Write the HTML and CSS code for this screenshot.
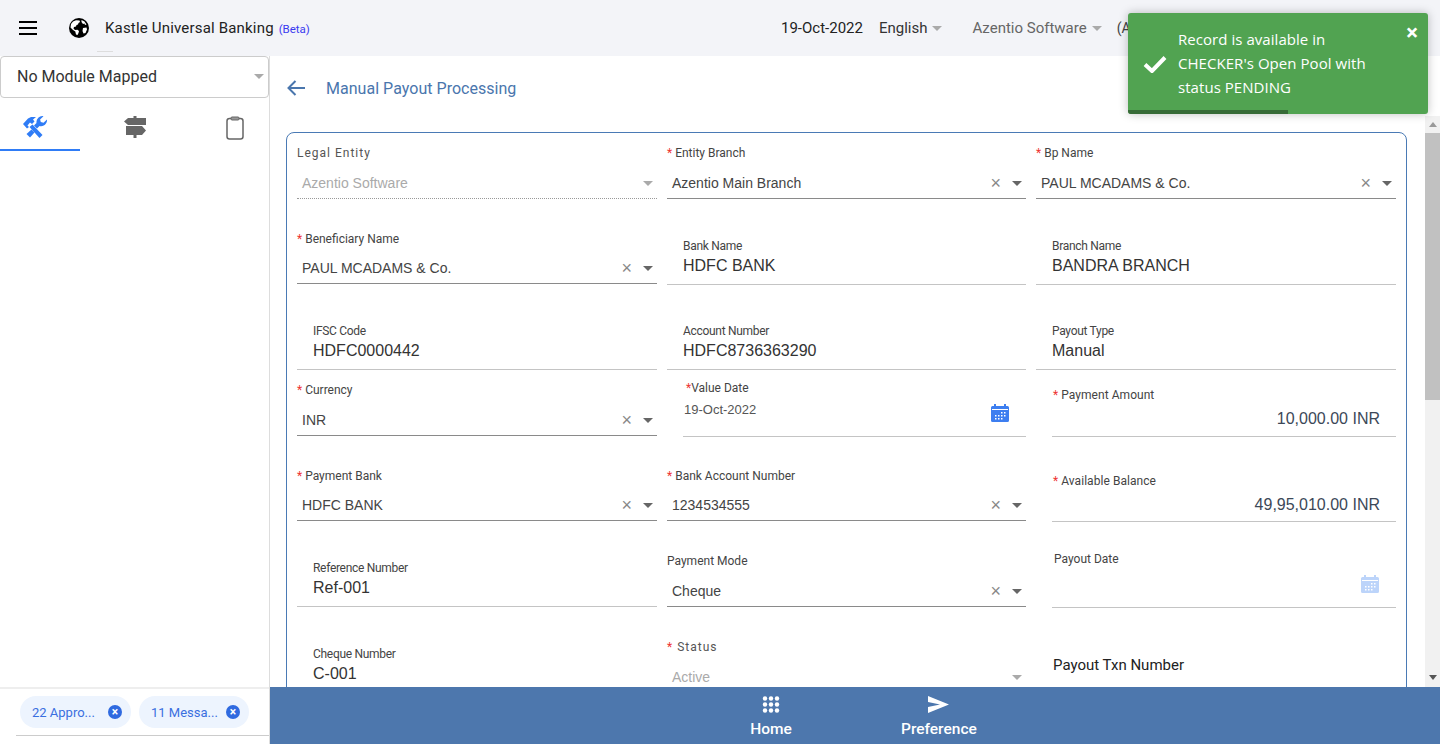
FILE: index.html
```html
<!DOCTYPE html>
<html>
<head>
    <title>Manual Payout Processing</title>
    <meta name="viewport" content="width=device-width, initial-scale=1.0">
    <link rel="stylesheet" href="styles.css">
</head>
<body>
    <svg width="0" height="0" class="defs">
        <symbol id="cal" viewBox="0 0 18 18">
            <path d="M3 0h2v2h8V0h2v2h1.500A1.500 1.500 0 0 1 18 3.500V16.500A1.500 1.500 0 0 1 16.500 18H1.500A1.500 1.500 0 0 1 0 16.500V3.500A1.500 1.500 0 0 1 1.500 2H3z" fill="currentColor"/>
            <path d="M1 5h16v1H1z" fill="#fff"/>
            <path d="M10 8h1.500v1.500H10zM13 8h1.500v1.500H13zM4 11h1.500v1.500H4zM7 11h1.500v1.500H7zM10 11h1.500v1.500H10zM13 11h1.500v1.500H13zM4 14h1.500v1.500H4zM7 14h1.500v1.500H7zM10 14h1.500v1.500H10z" fill="#fff"/>
        </symbol>
    </svg>

    <header class="topbar">
        <svg class="burger" width="18" height="14" viewBox="0 0 18 14"><path d="M0 0h18v2H0zM0 6h18v2H0zM0 12h18v2H0z" fill="#000"/></svg>
        <svg class="globe" width="20" height="20" viewBox="0 0 20 20">
            <circle cx="10" cy="10" r="10" fill="#000"/>
            <path d="M4 3.500l3-1.200 3.500.2.500 1.500-1.500 1-.5 1.500-1.500.5-.5 1.500-2 .5-.5 1.500 1.500 1.500 2.500-.3 1.500 1.300-.5 2-1 2-1.500-.5-.7-3-2.300-1.500L1.500 9.500 2 6z" fill="#fff"/>
            <path d="M12.500 2l3 1.500 2 3-1.500.5-.5-1.500-1.500.5-1.500-2zM14 10l3.500-.5.500 2-1.500 3.500-2 .5-1-2.500z" fill="#fff"/>
        </svg>
        <div class="brand">Kastle Universal Banking <span class="beta">(Beta)</span></div>
        <div class="topmenu">
            <span class="date">19-Oct-2022</span>
            <span class="menu-item dark">English<i class="caret"></i></span>
            <span class="menu-item">Azentio Software<i class="caret"></i></span>
            <span class="role">(Admin)</span>
        </div>
    </header>
    <div class="notch"></div>

    <div class="shell">
        <aside class="sidebar">
            <div class="module"><span>No Module Mapped</span><i class="caret"></i></div>
            <div class="tabs">
                <div class="tab active">
                    <svg width="26" height="22" viewBox="0 0 26 22" fill="#2f7cf6">
                        <path d="M1 8l5-5.500 3-1.500 5 0-3 2.500 1.500 2-2.500 2.500-2-1.500L5.500 9.500 7 11l-2 1.500z"/>
                        <path d="M7.500 11l3-2.500 10 10.500-3 3z"/>
                        <path d="M25 3.500l-3.500 3.200-2.700-.7-.7-2.500L21.500.2A6 6 0 0 0 14.500 7L12 9.500l3 3 2.500-2.500A6 6 0 0 0 25 3.500z"/>
                        <path d="M9.500 13.500l3 3-4.500 5-3.500-3.500z"/>
                    </svg>
                </div>
                <div class="tab">
                    <svg width="22" height="22" viewBox="0 0 22 22" fill="#666">
                        <path d="M9.500 0h3v2H22v7H4L0 5.500 4 2h5.500z"/>
                        <path d="M2 10h16l4 4.500-4 4.500h-5.500v3h-3v-3H2z"/>
                    </svg>
                </div>
                <div class="tab">
                    <svg width="18" height="24" viewBox="0 0 18 24" fill="none" stroke="#666" stroke-width="1.500">
                        <rect x="1" y="2.500" width="16" height="20.500" rx="2.500"/>
                        <rect x="5" y="1" width="8" height="3" rx="1" fill="#999" stroke="#666" stroke-width="1"/>
                    </svg>
                </div>
            </div>
            <div class="side-space"></div>
            <div class="chips">
                <span class="chip">22 Appro...<i class="chip-x">×</i></span>
                <span class="chip">11 Messa...<i class="chip-x">×</i></span>
            </div>
        </aside>

        <main class="content">
            <div class="title-row">
                <svg width="18" height="16" viewBox="0 0 18 16" fill="none" stroke="#4a76ad" stroke-width="2"><path d="M18 8H2M8.500 1L1.500 8l7 7"/></svg>
                <h1>Manual Payout Processing</h1>
            </div>
            <div class="scroller">
                <div class="pane">
                    <form class="card">
                        <div class="field select disabled"><label class="spaced">Legal Entity</label><div class="val">Azentio Software<i class="caret"></i></div></div>
                        <div class="field select"><label><b>*</b> Entity Branch</label><div class="val">Azentio Main Branch<i class="clear">×</i><i class="caret"></i></div></div>
                        <div class="field select"><label><b>*</b> Bp Name</label><div class="val">PAUL MCADAMS &amp; Co.<i class="clear">×</i><i class="caret"></i></div></div>

                        <div class="field select near"><label><b>*</b> Beneficiary Name</label><div class="val">PAUL MCADAMS &amp; Co.<i class="clear">×</i><i class="caret"></i></div></div>
                        <div class="field input"><label>Bank Name</label><div class="val">HDFC BANK</div></div>
                        <div class="field input"><label>Branch Name</label><div class="val">BANDRA BRANCH</div></div>

                        <div class="field input"><label>IFSC Code</label><div class="val">HDFC0000442</div></div>
                        <div class="field input"><label>Account Number</label><div class="val">HDFC8736363290</div></div>
                        <div class="field input"><label>Payout Type</label><div class="val">Manual</div></div>

                        <div class="field select"><label><b>*</b> Currency</label><div class="val">INR<i class="clear">×</i><i class="caret"></i></div></div>
                        <div class="field date"><label><b>*</b>Value Date</label><div class="val">19-Oct-2022<svg class="cal" width="18" height="18"><use href="#cal"/></svg></div></div>
                        <div class="field amount"><label><b>*</b> Payment Amount</label><div class="val">10,000.00 INR</div></div>

                        <div class="field select near"><label><b>*</b> Payment Bank</label><div class="val">HDFC BANK<i class="clear">×</i><i class="caret"></i></div></div>
                        <div class="field select near"><label><b>*</b> Bank Account Number</label><div class="val">1234534555<i class="clear">×</i><i class="caret"></i></div></div>
                        <div class="field amount near"><label><b>*</b> Available Balance</label><div class="val">49,95,010.00 INR</div></div>

                        <div class="field input low"><label>Reference Number</label><div class="val">Ref-001</div></div>
                        <div class="field select"><label>Payment Mode</label><div class="val">Cheque<i class="clear">×</i><i class="caret"></i></div></div>
                        <div class="field date empty"><label>Payout Date</label><div class="val"><svg class="cal" width="18" height="18"><use href="#cal"/></svg></div></div>

                        <div class="field input low"><label>Cheque Number</label><div class="val">C-001</div></div>
                        <div class="field select disabled"><label class="spaced"><b>*</b> Status</label><div class="val">Active<i class="caret"></i></div></div>
                        <div class="field plain"><label>Payout Txn Number</label></div>
                    </form>
                </div>
                <div class="scrollbar">
                    <span class="arrow up"></span>
                    <span class="thumb"></span>
                    <span class="arrow down"></span>
                </div>
            </div>
            <footer class="bottombar">
                <div class="nav-item home">
                    <svg width="18" height="17" viewBox="0 0 18 17" fill="#fff">
                        <circle cx="3" cy="2.500" r="2.200"/><circle cx="9" cy="2.500" r="2.200"/><circle cx="15" cy="2.500" r="2.200"/>
                        <circle cx="3" cy="8.500" r="2.200"/><circle cx="9" cy="8.500" r="2.200"/><circle cx="15" cy="8.500" r="2.200"/>
                        <circle cx="3" cy="14.500" r="2.200"/><circle cx="9" cy="14.500" r="2.200"/><circle cx="15" cy="14.500" r="2.200"/>
                    </svg>
                    <span>Home</span>
                </div>
                <div class="nav-item">
                    <svg width="21" height="17" viewBox="0 0 21 17" fill="#fff"><path d="M0 0l21 8.500L0 17v-6l12-2.500L0 6z"/></svg>
                    <span>Preference</span>
                </div>
            </footer>
        </main>
    </div>

    <div class="toast">
        <svg class="tick" width="24" height="18" viewBox="0 0 24 18"><path d="M2 9.500l7 6.500L22 2.500" fill="none" stroke="#fff" stroke-width="4"/></svg>
        <div class="toast-msg">Record is available in CHECKER's Open Pool with status PENDING</div>
        <span class="toast-x">×</span>
        <div class="toast-bar"></div>
    </div>
</body>
</html>
```

FILE: styles.css
```css
* { box-sizing: border-box; }
html, body { height: 100%; }
body { margin: 0; overflow: hidden; font-family: Roboto, "Liberation Sans", sans-serif; color: #333; background: #fff; }
i { font-style: normal; }
.defs { position: absolute; }

.caret { display: inline-block; width: 0; height: 0; border-left: 5px solid transparent; border-right: 5px solid transparent; border-top: 5px solid #aaa; }

/* top bar */
.topbar { height: 56px; background: #f3f4f8; display: flex; align-items: center; padding-left: 19px; color: #222; }
.globe { margin-left: 32px; }
.brand { margin-left: 16px; font-size: 15px; color: #222; letter-spacing: .18px; }
.beta { font-size: 11.5px; color: #3a3af0; margin-left: 1px; letter-spacing: 0; }
.topmenu { margin-left: auto; width: 659px; margin-right: 16px; flex: none; display: flex; align-items: center; font-size: 15px; white-space: nowrap; overflow: hidden; }
.date { color: #222; }
.menu-item { color: #666; margin-left: 16px; display: flex; align-items: center; }
.menu-item .caret { margin-left: 5px; margin-top: 1px; }
.menu-item.dark { color: #333; }
.menu-item + .menu-item { margin-left: 30px; }
.role { margin-left: 15px; color: #444; font-size: 14px; }
.notch { position: absolute; left: 97px; top: 51px; width: 16px; height: 1px; background: #ddd; }

.shell { display: flex; height: calc(100% - 56px); }

/* sidebar */
.sidebar { width: 270px; flex: none; border-right: 1px solid #ddd; display: flex; flex-direction: column; }
.module { height: 42px; border: 1px solid #ccc; border-radius: 4px; font-size: 16px; color: #333; display: flex; align-items: center; justify-content: space-between; padding: 0 4px 2px 16px; background: #fff; }
.tabs { display: flex; gap: 20px; height: 53px; overflow: hidden; }
.tab { flex: 0 0 80px; display: flex; justify-content: center; align-items: flex-start; padding: 18px 10px 0 0; }
.tab.active { border-bottom: 2px solid #2f7cf6; }
.side-space { flex: 1; }
.chips { height: 57px; border-top: 2px solid #eee; display: flex; gap: 8px; padding: 7px 0 0 20px; position: relative; }
.chips::after { content: ""; position: absolute; left: 16px; right: 0; top: 46px; height: 1px; background: #ccc; }
.chip { flex: 0 0 111px; height: 32px; border-radius: 16px; background: #edf4fe; color: #3a6fe0; font-size: 13px; display: flex; align-items: center; justify-content: space-between; padding: 0 9px 0 12px; white-space: nowrap; }
.chip + .chip { flex-basis: 110px; }
.chip-x { width: 14px; height: 14px; border-radius: 50%; background: #2f6ae0; color: #fff; font-size: 12px; line-height: 14px; text-align: center; font-weight: 700; }

/* main */
.content { flex: 1; min-width: 0; display: flex; flex-direction: column; position: relative; }
.title-row { height: 60px; flex: none; display: flex; align-items: center; padding: 4px 0 0 17px; }
.title-row h1 { margin: 0 0 0 21px; font-size: 16px; font-weight: 400; color: #4a76ad; letter-spacing: .03px; }
.scroller { flex: 1; min-height: 0; display: flex; }
.pane { flex: 1; min-width: 0; overflow: hidden; padding: 16px 18px 0 16px; }
.scrollbar { width: 15px; flex: none; background: #f1f1f1; display: flex; flex-direction: column; align-items: center; }
.thumb { width: 15px; height: 267px; background: #c1c1c1; }
.arrow { width: 0; height: 0; border-left: 4px solid transparent; border-right: 4px solid transparent; }
.arrow.up { border-bottom: 5px solid #999; margin: 6px 0 6px; }
.arrow.down { border-top: 5px solid #555; margin-top: auto; margin-bottom: 7px; }

/* form card */
.card { border: 1px solid #4a7ab5; border-radius: 8px; padding: 0 10px; display: grid; grid-template-columns: 360px 359px 360px; column-gap: 10px; grid-template-rows: 67px 85px 85px 67px 85px 86px 86px; }
.field { align-self: end; display: flex; flex-direction: column; min-width: 0; }
.field label { font-size: 12px; line-height: 14px; color: #444; }
.field label b { color: #e33; font-weight: 400; }
.field label.spaced { letter-spacing: 1px; }
.field .val { display: flex; align-items: center; white-space: nowrap; font-family: "Liberation Sans", Arial, sans-serif; }

.select { margin-bottom: 1px; }
.select .val { height: 31px; margin-top: 8px; border-bottom: 1px solid #8a8a8a; padding: 0 4px 0 5px; font-size: 14px; color: #444; }
.select.near .val { margin-top: 7px; }
.select .clear { margin-left: auto; color: #888; font-size: 18px; margin-right: 11px; }
.select .caret { border-top-color: #666; }
.disabled .caret { margin-left: auto; border-top-color: #aaa; }
.disabled .val { color: #aaa; border-bottom: 1px dotted #999; }
.disabled label { color: #555; }

.input { margin-bottom: 0; }
.input label { padding-left: 16px; letter-spacing: -.3px; }
.input .val { height: 32px; padding: 0 0 5px 16px; border-bottom: 1px solid #c4c4c4; font-size: 16px; color: #333; }
.input.low { margin-bottom: 1px; }

.date { margin: 0 0 0 16px; }
.date label { padding-left: 3px; }
.date .val { height: 38px; margin-top: 4px; padding: 3px 16px 0 1px; align-items: flex-start; border-bottom: 1px solid #c4c4c4; font-size: 13px; color: #555; position: relative; }
.cal { color: #3d7ef0; position: absolute; right: 17px; top: 5px; }
.empty label { padding-left: 2px; }
.empty .cal { color: #bcd4fa; }

.amount { margin-left: 16px; }
.amount label { padding-left: 1px; letter-spacing: .05px; }
.amount .val { height: 30px; margin-top: 5px; padding: 0 16px 6px 0; justify-content: flex-end; border-bottom: 1px solid #c4c4c4; font-size: 16px; color: #3c4858; }
.amount.near .val { height: 29px; padding-bottom: 5px; }

.plain { align-self: start; margin: 48px 0 0 17px; }
.plain label { font-size: 15px; line-height: 18px; color: #222; }

/* bottom bar */
.bottombar { height: 57px; flex: none; background: #4d77ad; display: flex; padding-left: 473px; gap: 102px; position: relative; z-index: 2; }
.nav-item { display: flex; flex-direction: column; align-items: center; color: #fff; font-size: 15.5px; font-weight: 500; padding-top: 9px; gap: 7px; line-height: 18px; }
.nav-item.home { width: 56px; }

/* toast */
.toast { position: absolute; left: 1128px; top: 13px; width: 300px; height: 101px; background: #51a351; border-radius: 3px; box-shadow: 0 0 10px rgba(0,0,0,.25); color: #fff; display: flex; align-items: center; overflow: hidden; }
.tick { margin-left: 15px; flex: none; }
.toast-msg { font-family: "Open Sans", sans-serif; font-size: 15px; line-height: 24px; margin-left: 11px; width: 210px; margin-top: -1px; letter-spacing: .05px; }
.toast-x { position: absolute; right: 10px; top: 8px; font-size: 22px; line-height: 24px; font-weight: 700; }
.toast-bar { position: absolute; left: 0; bottom: 0; width: 160px; height: 4px; background: #376b37; }
```
